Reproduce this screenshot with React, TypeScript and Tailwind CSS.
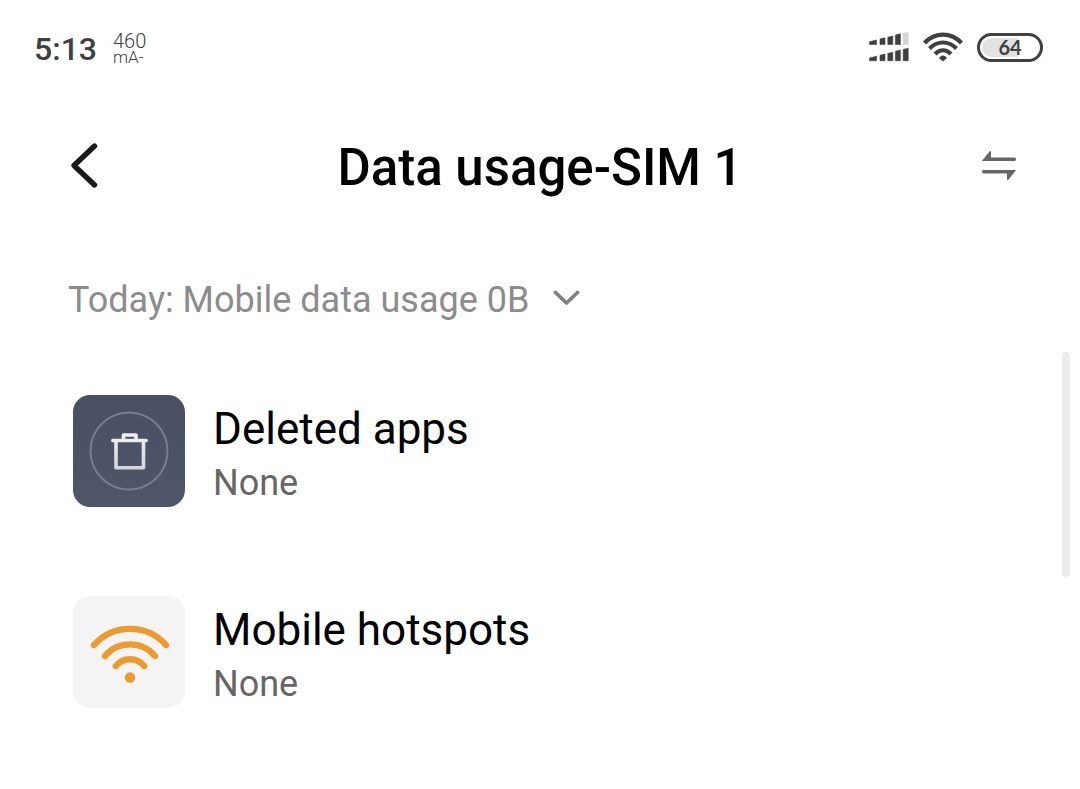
import type { ReactNode } from 'react'

interface UsageItemProps {
  icon: ReactNode
  title: string
  usage: string
}

function SignalIcon() {
  return (
    <svg className="h-[30px] w-10" viewBox="0 0 40 30" fill="#404040" stroke="#404040" strokeWidth="0.6" strokeLinejoin="round" aria-hidden="true">
      <path d="M0.500 9.800 7.500 8v4.500h-7z" />
      <path d="M11 7 16 5.800v6.700h-5z" />
      <path d="M18.800 5.200 23.800 4v8.500h-5z" />
      <path d="M26.400 3 31.400 1.800v10.700h-5z" />
      <path d="M34.200 1.200 39.200 0.300v12.200h-5z" fill="#d4d4d4" stroke="#d4d4d4" />
      <path d="M0.500 26 7.500 24.200v4.500h-7z" />
      <path d="M11 23.200 16 22v6.700h-5z" />
      <path d="M18.800 21.400 23.800 20.200v8.500h-5z" />
      <path d="M26.400 19.200 31.400 18v10.700h-5z" />
      <path d="M34.200 17.400 39.200 16.200v12.500h-5z" />
    </svg>
  )
}

function WifiIcon() {
  return (
    <svg className="h-[30px] w-10" viewBox="0 0 40 30" fill="none" stroke="#404040" strokeWidth="4.200" aria-hidden="true">
      <path d="M1.500 11C12 -0.200 28 -0.200 38.500 11" />
      <path d="M6.500 16.500C14.500 8.500 25.500 8.500 33.500 16.500" />
      <path d="M12 22C17 17 23 17 28 22" />
      <path d="M16 26C18 22.500 22 22.500 24 26L20 29.500z" fill="#404040" stroke="none" />
    </svg>
  )
}

function StatusBar() {
  return (
    <div className="flex h-24 items-center justify-between pr-[37px] pl-[34px] text-[#404040]">
      <div className="flex items-center gap-4 pt-[2px]">
        <span className="text-[32px] leading-9 font-medium">5:13</span>
        <span className="flex flex-col font-light">
          <span className="text-[20px] leading-4">460</span>
          <span className="text-[17px] leading-4">mA-</span>
        </span>
      </div>
      <div className="flex items-center gap-[14px] pb-[2px]">
        <SignalIcon />
        <WifiIcon />
        <div className="flex h-[29px] w-[66px] rounded-full border-3 border-[#404040] p-[2px]">
          <div className="flex w-full items-center justify-center rounded-full bg-linear-to-r from-[#e2e2e2] from-64% to-white to-64% font-['Lato'] text-[20px] leading-5 font-bold">
            64
          </div>
        </div>
      </div>
    </div>
  )
}

function TrashIcon() {
  return (
    <svg className="size-28 shrink-0" viewBox="0 0 112 112" fill="none" aria-hidden="true">
      <defs>
        <linearGradient id="trash-tile" x1="0" y1="0" x2="0" y2="1">
          <stop offset="0" stopColor="#4a5063" />
          <stop offset="1" stopColor="#50566a" />
        </linearGradient>
        <linearGradient id="trash-line" x1="0" y1="38" x2="0" y2="75" gradientUnits="userSpaceOnUse">
          <stop offset="0" stopColor="#f2f2f4" />
          <stop offset="1" stopColor="#d3d5da" />
        </linearGradient>
      </defs>
      <rect width="112" height="112" rx="17" fill="url(#trash-tile)" />
      <circle cx="56" cy="56" r="38.500" stroke="#777d8e" strokeWidth="2" />
      <g stroke="url(#trash-line)" strokeWidth="3.600" strokeLinecap="round" strokeLinejoin="round">
        <path d="M39.800 45.500h33.400M50.500 45v-5h12.500v5" />
        <path d="M43 46v26.800h27.500V46" />
      </g>
    </svg>
  )
}

function HotspotIcon() {
  return (
    <svg className="size-28 shrink-0" viewBox="0 0 112 112" fill="none" aria-hidden="true">
      <rect width="112" height="112" rx="17" fill="#f4f4f4" />
      <g stroke="#eb9b30" strokeWidth="6.400" strokeLinecap="round">
        <path d="M21 49C40 27.500 74 27.500 93 49" />
        <path d="M32 60C45 44.500 69 44.500 82 60" />
        <path d="M42.800 70C50 61 64 61 71.200 70" />
      </g>
      <circle cx="57" cy="81.500" r="5.200" fill="#eb9b30" />
    </svg>
  )
}

function UsageItem({ icon, title, usage }: UsageItemProps) {
  return (
    <li className="flex items-center gap-7">
      {icon}
      <div className="flex flex-col pt-1">
        <h2 className="text-[44px] leading-[60px] text-black">{title}</h2>
        <p className="text-[36px] leading-12 text-[#666666]">{usage}</p>
      </div>
    </li>
  )
}

export default function App() {
  return (
    <div className="relative min-h-screen bg-white font-['Roboto',sans-serif]">
      <StatusBar />

      <header className="flex h-[140px] items-center justify-between px-[60px]">
        <button type="button" aria-label="Back" className="flex size-12 items-center justify-center">
          <svg className="size-12" viewBox="0 0 48 48" fill="none" stroke="#1a1a1a" strokeWidth="5.400" strokeLinecap="round" strokeLinejoin="round">
            <path d="M34.500 4 14 23.500 34.500 43" />
          </svg>
        </button>
        <h1 className="pt-1 text-[51px] leading-[60px] font-medium text-black">Data usage-SIM 1</h1>
        <button type="button" aria-label="Switch SIM" className="flex size-12 items-center justify-center">
          <svg className="size-12" viewBox="0 0 48 48" fill="#666666">
            <path d="M9.800 19 17.500 9.500Q19 8.200 19 10V15.500H42.500Q44 15.500 44 17.200T42.500 19z" />
            <path d="M44.200 28 36.500 37.500Q35 38.800 35 37V31.500H11.500Q10 31.500 10 29.700T11.500 28z" />
          </svg>
        </button>
      </header>

      <main>
        <button type="button" className="flex items-center gap-[22px] px-[68px] pt-10 text-[36px] leading-12 text-[#8c8c8c]">
          Today: Mobile data usage 0B
          <svg className="h-5 w-8" viewBox="0 0 32 20" fill="none" stroke="#808080" strokeWidth="3.800" strokeLinecap="round" strokeLinejoin="round" aria-hidden="true">
            <path d="M4.500 2.500 15.500 13 26.500 2.500" />
          </svg>
        </button>

        <ul className="flex flex-col gap-[89px] px-[73px] pt-[71px] pb-20">
          <UsageItem icon={<TrashIcon />} title="Deleted apps" usage="None" />
          <UsageItem icon={<HotspotIcon />} title="Mobile hotspots" usage="None" />
        </ul>
      </main>

      <div className="absolute top-[352px] right-[10px] h-[225px] w-2 rounded-full bg-[#ececec]" />
    </div>
  )
}
